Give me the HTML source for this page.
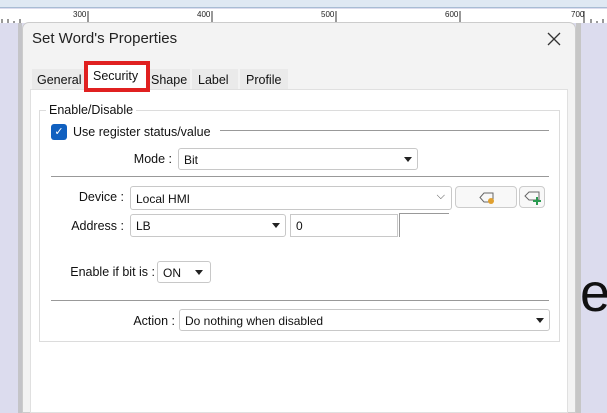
<!DOCTYPE html>
<html><head><style>
*{box-sizing:border-box;margin:0;padding:0}
body{width:607px;height:413px;overflow:hidden;position:relative;background:#dcdcee;font-family:"Liberation Sans",sans-serif;font-size:12.5px;color:#111}
.a{position:absolute}
.dd{position:absolute;background:#fff;border:1px solid #c8c8c8;border-radius:3px;padding:4px 5px;font-size:12px}
.tri{position:absolute;right:5px;top:8px;width:0;height:0;border-left:4px solid transparent;border-right:4px solid transparent;border-top:5px solid #222}
.lbl{position:absolute;font-size:12.5px;text-align:right}
</style></head><body>
<div class="a" style="left:0;top:0;width:607px;height:8px;background:#dfe8f3;border-bottom:1px solid #a8bcd4"></div>
<div class="a" style="left:0;top:9px;width:607px;height:14px;background:#fff">
<svg width="607" height="14" style="position:absolute;left:0;top:0">
<g stroke="#333" stroke-width="1">
<path d="M2 10v4M8 10v4M14 12v2M20 10v4M88 2v12M212 2v12M336 2v12M460 2v12M584 2v12M591 10v4M597 12v2M603 10v4"/>
</g>
<g font-size="8" fill="#222" font-family="Liberation Sans"><text x="73" y="8">300</text><text x="197" y="8">400</text><text x="321" y="8">500</text><text x="445" y="8">600</text><text x="571" y="8">700</text></g>
</svg></div>
<div class="a" style="left:0;top:23px;width:22px;height:390px;background:#dcdcee;border-right:4px solid #c4c4c8"></div>
<div class="a" style="left:576px;top:23px;width:31px;height:390px;background:#dcdcee;border-left:5px solid #c6c6c6"></div>
<div class="a" style="left:580px;top:262px;font-size:54px;color:#111">e</div>
<div class="a" style="left:22px;top:22px;width:554px;height:391px;background:#f3f3f3;border:1px solid #ccc;border-radius:7px 7px 0 0"></div>
<div class="a" style="left:32px;top:30px;font-size:15px;color:#222">Set Word's Properties</div>
<svg class="a" style="left:547px;top:32px" width="14" height="14"><path d="M1 1L13 13M13 1L1 13" stroke="#333" stroke-width="1.3"/></svg>
<div class="a" style="left:32px;top:69px;width:54px;height:21px;background:#eaeaea;padding:4px 5px">General</div>
<div class="a" style="left:148px;top:69px;width:42px;height:21px;background:#eaeaea;padding:4px 3px">Shape</div>
<div class="a" style="left:192px;top:69px;width:46px;height:21px;background:#eaeaea;padding:4px 6px">Label</div>
<div class="a" style="left:240px;top:69px;width:48px;height:21px;background:#eaeaea;padding:4px 6px">Profile</div>
<div class="a" style="left:30px;top:89px;width:538px;height:324px;background:#fff;border:1px solid #e0e0e0"></div>
<div class="a" style="left:84px;top:61px;width:66px;height:31px;border:4px solid #e02020;background:#fff;padding:4px 5px">Security</div>
<div class="a" style="left:39px;top:110px;width:521px;height:232px;border:1px solid #dcdcdc"></div>
<div class="a" style="left:46px;top:103px;background:#fff;padding:0 3px">Enable/Disable</div>
<div class="a" style="left:51px;top:124px;width:16px;height:16px;background:#1060c0;border-radius:3px;color:#fff;font-size:11px;text-align:center;line-height:16px">✓</div>
<div class="a" style="left:73px;top:125px">Use register status/value</div>
<div class="a" style="left:220px;top:130px;width:329px;height:1px;background:#999"></div>
<div class="lbl" style="left:100px;top:152px;width:72px">Mode :</div>
<div class="dd" style="left:178px;top:148px;width:240px;height:22px">Bit<div class="tri"></div></div>
<div class="a" style="left:51px;top:176px;width:498px;height:1px;background:#999"></div>
<div class="lbl" style="left:50px;top:190px;width:74px">Device :</div>
<div class="dd" style="left:130px;top:186px;width:322px;height:24px;padding-top:5px">Local HMI<span style="position:absolute;right:6px;top:3px;font-size:11px;color:#444">⌵</span></div>
<div class="a" style="left:455px;top:186px;width:62px;height:22px;border:1px solid #ccc;border-radius:4px;background:#f8f8f8">
<svg width="62" height="22"><path d="M28 6h9v9h-9l-4-4.5z" fill="none" stroke="#666"/><circle cx="35" cy="14" r="3" fill="#e0a030"/></svg></div>
<div class="a" style="left:519px;top:186px;width:26px;height:22px;border:1px solid #ccc;border-radius:4px;background:#f8f8f8">
<svg width="26" height="22"><path d="M9 5h10v8h-10l-4-4z" fill="none" stroke="#666"/><path d="M17 10v8M13 14h8" stroke="#2a9a50" stroke-width="2"/></svg></div>
<div class="lbl" style="left:50px;top:219px;width:74px">Address :</div>
<div class="dd" style="left:130px;top:214px;width:156px;height:23px">LB<div class="tri"></div></div>
<div class="a" style="left:290px;top:214px;width:108px;height:23px;border:1px solid #c8c8c8;background:#fff;padding:4px 5px;font-size:12px">0</div>
<div class="a" style="left:399px;top:213px;width:50px;height:1px;background:#999"></div>
<div class="a" style="left:399px;top:213px;width:1px;height:24px;background:#999"></div>
<div class="lbl" style="left:55px;top:265px;width:100px">Enable if bit is :</div>
<div class="dd" style="left:157px;top:261px;width:54px;height:22px">ON<div class="tri" style="right:7px"></div></div>
<div class="a" style="left:51px;top:300px;width:498px;height:1px;background:#999"></div>
<div class="lbl" style="left:100px;top:314px;width:75px">Action :</div>
<div class="dd" style="left:179px;top:309px;width:371px;height:22px">Do nothing when disabled<div class="tri"></div></div>
</body></html>
